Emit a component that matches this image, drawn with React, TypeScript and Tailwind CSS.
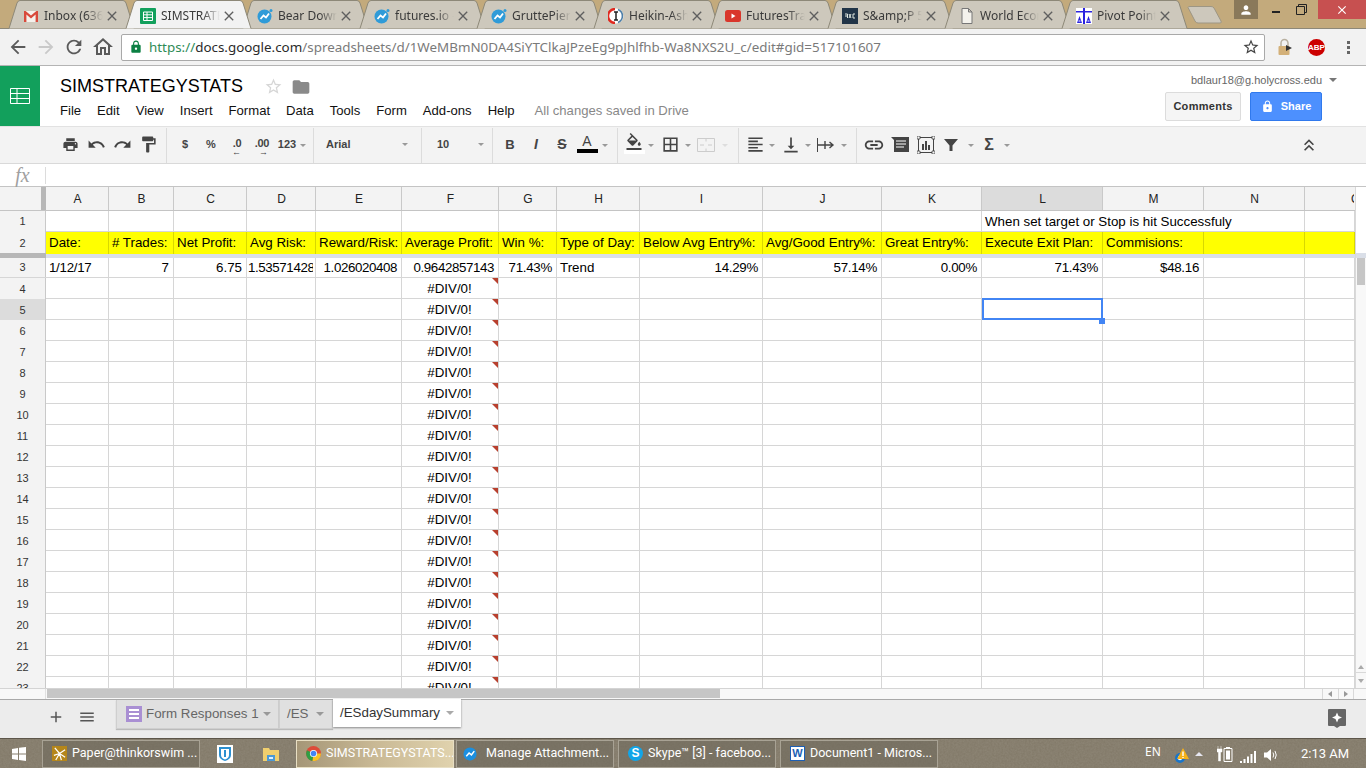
import type { ReactNode } from "react";
import {
  MdAdd,
  MdArrowBack,
  MdArrowForward,
  MdBorderAll,
  MdClose,
  MdFolder,
  MdFormatAlignLeft,
  MdFormatColorFill,
  MdFormatPaint,
  MdKeyboardDoubleArrowUp,
  MdLink,
  MdLock,
  MdMenu,
  MdOutlineHome,
  MdPerson,
  MdPrint,
  MdRedo,
  MdRefresh,
  MdStarBorder,
  MdUndo,
  MdVerticalAlignBottom,
} from "react-icons/md";

const GRID_COLS =
  "grid grid-cols-[46px_63px_65px_73px_69px_86px_97px_58px_83px_123px_119px_100px_121px_101px_101px_50px]";

const TABS = [
  { title: "Inbox (636)", icon: "gmail" },
  { title: "SIMSTRATEGYSTATS", icon: "sheets", active: true },
  { title: "Bear Down Trading", icon: "blue" },
  { title: "futures.io - Forum", icon: "blue" },
  { title: "GruttePier Trader", icon: "blue" },
  { title: "Heikin-Ashi Candles", icon: "heikin" },
  { title: "FuturesTrader71", icon: "yt" },
  { title: "S&amp;P 500", icon: "pxc" },
  { title: "World Economic", icon: "doc" },
  { title: "Pivot Points", icon: "pivot" },
];

const HEADERS = ["A", "B", "C", "D", "E", "F", "G", "H", "I", "J", "K", "L", "M", "N", "O"];

const ROW2 = [
  "Date:",
  "# Trades:",
  "Net Profit:",
  "Avg Risk:",
  "Reward/Risk:",
  "Average Profit:",
  "Win %:",
  "Type of Day:",
  "Below Avg Entry%:",
  "Avg/Good Entry%:",
  "Great Entry%:",
  "Execute Exit Plan:",
  "Commisions:",
  "",
  "",
];

const ROW3: [string, string][] = [
  ["1/12/17", "text-left tracking-[-0.3px]"],
  ["7", "text-right"],
  ["6.75", "text-right"],
  ["1.535714286", "text-left tracking-[-0.4px] !pl-[1px]"],
  ["1.026020408", "text-right tracking-[-0.4px]"],
  ["0.9642857143", "text-right tracking-[-0.4px]"],
  ["71.43%", "text-right tracking-[-0.3px]"],
  ["Trend", "text-left"],
  ["14.29%", "text-right tracking-[-0.3px]"],
  ["57.14%", "text-right tracking-[-0.3px]"],
  ["0.00%", "text-right tracking-[-0.3px]"],
  ["71.43%", "text-right tracking-[-0.3px]"],
  ["$48.16", "text-right tracking-[-0.3px]"],
  ["", ""],
  ["", ""],
];

const ERROR_ROWS = Array.from({ length: 20 }, (_, i) => i + 4);

function Favicon({ kind }: { kind: string }) {
  if (kind === "gmail")
    return (
      <svg viewBox="0 0 16 16" className="w-4 h-4 shrink-0">
        <rect x="1" y="3" width="14" height="11" fill="#f4f1ec" />
        <path d="M1 14V3h1.6L8 7.6 13.4 3H15v11h-2.4V6.6L8 10.400 3.400 6.600V14z" fill="#d8493b" />
      </svg>
    );
  if (kind === "sheets")
    return (
      <svg viewBox="0 0 16 16" className="w-4 h-4 shrink-0">
        <rect width="16" height="16" rx="1" fill="#12a05c" />
        <path d="M3.5 4h9v8.5h-9zM3.5 6.8h9M3.5 9.6h9M7 4v8.5" fill="none" stroke="#fff" />
      </svg>
    );
  if (kind === "blue")
    return (
      <svg viewBox="0 0 16 16" className="w-4 h-4 shrink-0">
        <circle cx="7.5" cy="8.5" r="7" fill="#2f9bd8" />
        <path d="M3.5 11 6.5 7.5 9 9.5l3-4" fill="none" stroke="#fff" strokeWidth="1.8" />
        <circle cx="14" cy="2.5" r="1.5" fill="#2f9bd8" />
      </svg>
    );
  if (kind === "heikin")
    return (
      <svg viewBox="0 0 16 16" className="w-4 h-4 shrink-0">
        <circle cx="8" cy="8" r="7.5" fill="#fff" />
        <path d="M7 1a7 7 0 0 0 0 14" fill="none" stroke="#e0291f" strokeWidth="2.4" />
        <path d="M10 1.5a7 7 0 0 1 0 13" fill="none" stroke="#4d7ea8" strokeWidth="1.6" />
        <path d="M6 4h4M6 12h4M8 4v8" fill="none" stroke="#222" strokeWidth="1.5" />
      </svg>
    );
  if (kind === "yt")
    return (
      <svg viewBox="0 0 16 16" className="w-4 h-4 shrink-0">
        <rect y="2" width="16" height="12" rx="2.5" fill="#d9362b" />
        <path d="M6.5 5.5v5l4-2.5z" fill="#fff" />
      </svg>
    );
  if (kind === "pxc")
    return (
      <svg viewBox="0 0 16 16" className="w-4 h-4 shrink-0">
        <rect width="16" height="16" fill="#223548" />
        <path d="M3 6h2.5v4M3 8h2.5M7 6l2 4M9 6l-2 4M13 6h-2v4h2" fill="none" stroke="#dfe7df" strokeWidth="1" />
      </svg>
    );
  if (kind === "doc")
    return (
      <svg viewBox="0 0 16 16" className="w-4 h-4 shrink-0">
        <path d="M3 .5h6.5l3.5 3.500v11.500H3zM9.500.5V4H13" fill="#f4f2ec" stroke="#777" />
      </svg>
    );
  return (
    <svg viewBox="0 0 16 16" className="w-4 h-4 shrink-0">
      <rect width="16" height="16" fill="#fff" />
      <path d="M0 3h16v1.500H0zM7 0h2v16H7zM1 15l2.500-7L6 15zM10 15l2.500-7 2.500 7z" fill="#2a22e0" />
      <path d="M2.500 13h2M11.500 13h2" stroke="#fff" />
    </svg>
  );
}

function ChromeTab({ title, icon, active }: { title: string; icon: string; active?: boolean }) {
  return (
    <div className={`relative w-[117px] h-[28px] shrink-0 flex items-center pl-[10px] pt-[3px] ${active ? "z-10" : ""}`}>
      <svg viewBox="0 0 127 29" className="absolute left-[-5px] top-0 w-[127px] h-[29px]">
        <path
          d="M1 28.500 9 3Q10 .5 12 .5H115Q117 .5 118 3L126 28.500"
          fill={active ? "#f2f2f2" : "#cdc8bc"}
          stroke="#8d8878"
        />
      </svg>
      <div className="relative flex items-center h-[16px]">
        <Favicon kind={icon} />
        <span className="ml-[5px] w-[60px] overflow-hidden whitespace-nowrap text-[12px] leading-4 text-[#3a3a3a] font-['Noto_Sans'] [mask-image:linear-gradient(to_right,black_70%,transparent_98%)]">
          {title}
        </span>
        <MdClose className="w-[16px] h-[16px] text-[#5f5f5f] shrink-0" />
      </div>
    </div>
  );
}

function TabStrip() {
  return (
    <div className="relative h-[29px] shrink-0 bg-[#c3aa7c] border-b border-[#8d8878] flex pl-[13px]">
      {TABS.map((t) => (
        <ChromeTab key={t.title} {...t} />
      ))}
      <svg viewBox="0 0 36 18" className="ml-[4px] mt-[6px] w-[36px] h-[18px]">
        <path d="M1 1.500Q1 .5 3 .5H24Q26 .5 27 2L34 15Q35 17 33 17H11Q9 17 8 15z" fill="#cdc8bc" stroke="#9d9684" />
      </svg>
      <div className="ml-auto flex items-start h-[19px]">
        <div className="w-[24px] h-[19px] bg-[#8a795a] flex items-center justify-center">
          <MdPerson className="w-[14px] h-[14px] text-white" />
        </div>
        <div className="w-[60px] h-[19px] pl-[3px] flex items-center justify-center gap-[16px]">
          <span className="w-[8px] h-[2px] mt-[5px] bg-[#222]" />
          <svg viewBox="0 0 11 11" className="w-[11px] h-[11px]">
            <path d="M.5 2.500h8v8h-8zM2.500 2.500v-2h8v8h-2" fill="none" stroke="#222" />
          </svg>
        </div>
        <div className="w-[48px] h-[19px] bg-[#c75050] flex items-center justify-center">
          <MdClose className="w-[14px] h-[14px] text-white" />
        </div>
      </div>
    </div>
  );
}

function AddressBar() {
  return (
    <div className="h-[37px] shrink-0 bg-[#f2f2f2] border-b border-[#b4b4b4] flex items-center">
      <div className="w-[121px] flex items-center pl-[7px] gap-[6px] text-[#5a5a5a]">
        <MdArrowBack className="w-[22px] h-[22px]" />
        <MdArrowForward className="w-[22px] h-[22px] text-[#c9c9c9]" />
        <MdRefresh className="w-[22px] h-[22px]" />
        <MdOutlineHome className="w-[24px] h-[24px]" />
      </div>
      <div className="w-[1144px] h-[27px] bg-white border border-[#a9a9a9] rounded-[2px] flex items-center pl-[7px] pr-[4px] font-['Noto_Sans'] text-[13.4px]">
        <MdLock className="w-[14px] h-[14px] text-[#0b8043] shrink-0" />
        <span className="ml-[6px] whitespace-nowrap">
          <span className="text-[#2e8b57]">https://</span>
          <span className="text-[#2a2a2a]">docs.google.com</span>
          <span className="text-[#7a7a7a]">/spreadsheets/d/1WeMBmN0DA4SiYTClkaJPzeEg9pJhlfhb-Wa8NXS2U_c/edit#gid=517101607</span>
        </span>
        <MdStarBorder className="ml-auto w-[18px] h-[18px] text-[#444]" />
      </div>
      <div className="flex-1 flex items-center pl-[12px]">
        <svg viewBox="0 0 16 18" className="w-[16px] h-[18px]">
          <path d="M4 8V5a3.500 3.500 0 0 1 7 0v3" fill="none" stroke="#b8b0a0" strokeWidth="1.5" />
          <rect x="1.5" y="8" width="11" height="9" rx="1" fill="#d3b078" />
          <path d="M9 7l6 3-6 3z" fill="#333" />
        </svg>
        <span className="w-[17px] h-[17px] ml-[15px] rounded-full bg-[#c00] text-white text-[8px] font-bold leading-[17px] text-center font-['Liberation_Sans']">
          ABP
        </span>
        <span className="flex flex-col gap-[2px] ml-[22px]">
          <span className="w-[3px] h-[3px] bg-[#666]" />
          <span className="w-[3px] h-[3px] bg-[#666]" />
          <span className="w-[3px] h-[3px] bg-[#666]" />
        </span>
      </div>
    </div>
  );
}

function SheetHeader() {
  const menu = ["File", "Edit", "View", "Insert", "Format", "Data", "Tools", "Form", "Add-ons", "Help"];
  return (
    <div className="h-[60px] shrink-0 bg-white flex">
      <div className="w-[40px] bg-[#12a05c] flex items-center justify-center">
        <svg viewBox="0 0 20 16" className="w-[20px] h-[16px]">
          <path d="M.5.5h19v15H.5zM.5 5.500h19M.5 10.500h19M7 .5v15" fill="none" stroke="#fff" />
        </svg>
      </div>
      <div className="pl-[20px] flex-1">
        <div className="flex items-center h-[23px] mt-[9px]">
          <span className="text-[18px] leading-[23px] text-black">SIMSTRATEGYSTATS</span>
          <MdStarBorder className="ml-[21px] w-[19px] h-[19px] text-[#d6d6d6]" />
          <MdFolder className="ml-[8px] w-[20px] h-[20px] text-[#8a8a8a]" />
        </div>
        <div className="flex items-center gap-[16px] mt-[3px] text-[13.1px] leading-[20px] text-[#111]">
          {menu.map((m) => (
            <span key={m}>{m}</span>
          ))}
          <span className="ml-[4px] text-[#888]">All changes saved in Drive</span>
        </div>
      </div>
      <div className="w-[201px] relative">
        <div className="flex items-center h-[16px] mt-[6px] pl-[26px] text-[11px] text-[#666]">
          bdlaur18@g.holycross.edu
          <span className="ml-[7px] w-0 h-0 border-x-[4px] border-x-transparent border-t-[4px] border-t-[#777]" />
        </div>
        <div className="flex mt-[4px]">
          <div className="w-[76px] h-[29px] bg-[#f5f5f5] border border-[#dcdcdc] rounded-[2px] text-[11px] font-bold text-[#333] tracking-[0.3px] flex items-center justify-center">
            Comments
          </div>
          <div className="ml-[9px] w-[72px] h-[29px] bg-[#4d90fe] border border-[#3079ed] rounded-[2px] text-[11px] font-bold text-white flex items-center justify-center">
            <MdLock className="w-[13px] h-[13px] mr-[7px]" />
            Share
          </div>
        </div>
      </div>
    </div>
  );
}

function Tool({ className, children }: { className: string; children: ReactNode }) {
  return <div className={`relative h-[22px] -mt-px shrink-0 flex items-center justify-center text-[#444] ${className}`}>{children}</div>;
}

function Caret({ className = "", light }: { className?: string; light?: boolean }) {
  return (
    <div className={`w-[9px] shrink-0 flex justify-center ${className}`}>
      <span className={`w-0 h-0 border-x-[3.5px] border-x-transparent border-t-[3.5px] ${light ? "border-t-[#ddd]" : "border-t-[#999]"}`} />
    </div>
  );
}

function Divider({ className = "" }: { className?: string }) {
  return <span className={`w-px h-[35px] bg-[#dcdcdc] shrink-0 ${className}`} />;
}

function Toolbar() {
  return (
    <div className="h-[37px] shrink-0 bg-[#f3f3f3] border-t border-[#e2e2e2] flex items-center pl-[57px]">
      <Tool className="w-[26px]"><MdPrint className="w-[17px] h-[17px]" /></Tool>
      <Tool className="w-[26px]"><MdUndo className="w-[19px] h-[19px]" /></Tool>
      <Tool className="w-[26px]"><MdRedo className="w-[19px] h-[19px]" /></Tool>
      <Tool className="w-[26px]"><MdFormatPaint className="w-[19px] h-[19px]" /></Tool>
      <Divider className="ml-[5px]" />
      <Tool className="w-[26px] ml-[5px] text-[11px] font-bold">$</Tool>
      <Tool className="w-[26px] text-[11px] font-bold">%</Tool>
      <Tool className="w-[26px] text-[11px] font-bold">
        <span className="-mt-[3px] tracking-[-0.3px]">.0</span>
        <span className="absolute left-[8px] top-[14px] text-[9px] leading-[8px]">←</span>
      </Tool>
      <Tool className="w-[24px] text-[11px] font-bold">
        <span className="-mt-[3px] tracking-[-0.3px]">.00</span>
        <span className="absolute left-[9px] top-[14px] text-[9px] leading-[8px]">→</span>
      </Tool>
      <Tool className="w-[26px] text-[11px] font-bold">123</Tool>
      <Caret className="-ml-[2px]" />
      <Divider className="ml-[6px]" />
      <Tool className="w-[107px] !justify-start pl-[12px] text-[11px] font-bold">
        Arial
        <Caret className="absolute left-[86px] top-[9px]" />
      </Tool>
      <Divider />
      <Tool className="w-[70px] !justify-start pl-[15px] text-[11px] font-bold">
        10
        <Caret className="absolute left-[54px] top-[9px]" />
      </Tool>
      <Divider />
      <Tool className="w-[26px] ml-[4px] text-[13px] font-bold">B</Tool>
      <Tool className="w-[26px] text-[14px] font-bold italic">I</Tool>
      <Tool className="w-[26px] text-[14px] font-bold line-through">S</Tool>
      <Tool className="w-[24px] flex-col">
        <span className="text-[14px] leading-[14px] -mt-[2px]">A</span>
        <span className="w-[21px] h-[4px] bg-black mt-[1px]" />
      </Tool>
      <Caret className="ml-px" />
      <Divider className="ml-[8px]" />
      <Tool className="w-[24px] ml-[4px] flex-col">
        <MdFormatColorFill className="w-[18px] h-[18px] -mt-[3px]" />
        <span className="w-[21px] h-[4px] bg-white mt-[-1px]" />
      </Tool>
      <Caret />
      <Tool className="w-[24px] ml-[3px]"><MdBorderAll className="w-[19px] h-[19px]" /></Tool>
      <Caret className="ml-px" />
      <Tool className="w-[24px] ml-[2px]">
        <svg viewBox="0 0 18 14" className="w-[18px] h-[14px]">
          <path d="M.5.5h17v13H.5zM9 .5v3M9 10.500v3M3 7h4M15 7h-4" fill="none" stroke="#ccc" />
        </svg>
      </Tool>
      <Caret light className="ml-[2px]" />
      <Divider className="ml-[9px]" />
      <Tool className="w-[24px] ml-[4px]"><MdFormatAlignLeft className="w-[19px] h-[19px]" /></Tool>
      <Caret />
      <Tool className="w-[24px] ml-[3px]"><MdVerticalAlignBottom className="w-[20px] h-[20px]" /></Tool>
      <Caret />
      <Tool className="w-[24px] ml-[2px]">
        <svg viewBox="0 0 18 16" className="w-[18px] h-[16px]">
          <path d="M.5 1v14" stroke="#444" fill="none" />
          <path d="M1 8h15M12.500 5l3.500 3-3.500 3M8 4v8" stroke="#444" fill="none" strokeWidth="1.4" />
        </svg>
      </Tool>
      <Caret className="ml-px" />
      <Divider className="ml-[8px]" />
      <Tool className="w-[26px] ml-[4px]"><MdLink className="w-[22px] h-[22px]" /></Tool>
      <Tool className="w-[26px]">
        <svg viewBox="0 0 18 15" className="w-[18px] h-[15px]">
          <path d="M0 0h18v15H3V3z" fill="#444" />
          <path d="M5 4h10M5 7h10M5 10h8" stroke="#fff" />
        </svg>
      </Tool>
      <Tool className="w-[26px]">
        <svg viewBox="0 0 18 18" className="w-[18px] h-[18px]">
          <path d="M1.500 1.500h15v15h-15z" fill="none" stroke="#444" />
          <path d="M5 8h2v6H5zM8 5h2v9H8zM11 9h2v5h-2z" fill="#444" />
          <path d="M0 0h3v3H0zM15 0h3v3h-3zM0 15h3v3H0zM15 15h3v3h-3z" fill="#f3f3f3" stroke="#444" strokeWidth=".8" />
        </svg>
      </Tool>
      <Tool className="w-[24px]">
        <svg viewBox="0 0 14 14" className="w-[14px] h-[14px]">
          <path d="M0 1h14L8.500 7.500V13h-3V7.500z" fill="#444" />
        </svg>
      </Tool>
      <Caret className="ml-[3px]" />
      <Tool className="w-[24px] ml-[2px] text-[16px] font-bold">Σ</Tool>
      <Caret className="ml-px" />
      <Tool className="w-[24px] ml-[286px]"><MdKeyboardDoubleArrowUp className="w-[20px] h-[20px]" /></Tool>
    </div>
  );
}

function FormulaBar() {
  return (
    <div className="h-[24px] shrink-0 bg-white border-y border-[#d9d9d9] border-b-[#c4c4c4] flex items-center">
      <span className="w-[45px] text-center text-[20px] italic leading-none text-[#a0a0a0] font-['Liberation_Serif']">fx</span>
      <span className="w-px h-[17px] bg-[#dcdcdc]" />
    </div>
  );
}

function ColumnHeader() {
  return (
    <div className={`${GRID_COLS} h-[24px] bg-[#f3f3f3] border-b border-[#c4c4c4]`}>
      <div className="border-r-[5px] border-[#b7b7b7]" />
      {HEADERS.map((h) => (
        <div
          key={h}
          className={`flex items-center border-r text-[12px] text-[#222] ${h === "L" ? "bg-[#dcdcdc]" : ""} ${
            h === "O" ? "pl-[46px] overflow-hidden border-transparent" : "justify-center pl-px border-[#c9c9c9]"
          }`}
        >
          {h}
        </div>
      ))}
    </div>
  );
}

function RowNumber({ n, selected }: { n: number; selected?: boolean }) {
  return (
    <div className={`flex items-center justify-center border-r border-[#c9c9c9] text-[11px] text-[#333] ${selected ? "bg-[#dcdcdc]" : "bg-[#f3f3f3]"}`}>
      {n}
    </div>
  );
}

function Cell({ className = "", children }: { className?: string; children?: ReactNode }) {
  return (
    <div className={`relative pl-[3px] pr-[4px] border-r border-[#d6d6d6] text-[13.33px] leading-[22px] text-black whitespace-nowrap ${className}`}>
      {children}
    </div>
  );
}

function DataRow({ n }: { n: number }) {
  return (
    <div className={`${GRID_COLS} h-[21px] shrink-0 border-b border-[#d6d6d6]`}>
      <RowNumber n={n} selected={n === 5} />
      {HEADERS.map((h) => (
        <Cell key={h} className={h === "F" ? "text-center" : ""}>
          {h === "F" && (
            <>
              #DIV/0!
              <span className="absolute top-0 right-0 w-0 h-0 border-l-[6px] border-l-transparent border-t-[6px] border-t-[#b8402e]" />
            </>
          )}
          {h === "L" && n === 5 && (
            <>
              <span className="absolute left-0 -top-px w-[121px] h-[22px] border-2 border-[#4285f4]" />
              <span className="absolute -right-[3px] -bottom-[3px] w-[6px] h-[6px] bg-[#4285f4] z-10" />
            </>
          )}
        </Cell>
      ))}
    </div>
  );
}

function Grid() {
  return (
    <div className="w-[1355px] h-[501px] shrink-0 overflow-hidden bg-white">
      <ColumnHeader />
      <div className={`${GRID_COLS} h-[21px] border-b border-[#d6d6d6]`}>
        <RowNumber n={1} />
        {HEADERS.slice(0, 11).map((h) => (
          <Cell key={h} />
        ))}
        <Cell className="col-span-3 !leading-[21px]">When set target or Stop is hit Successfuly</Cell>
        <Cell />
      </div>
      <div className={`${GRID_COLS} h-[21px] border-b border-[#d8d800]`}>
        <RowNumber n={2} />
        {ROW2.map((t, i) => (
          <Cell key={i} className="bg-[#ffff00] !border-[#d8d800]">
            {t}
          </Cell>
        ))}
      </div>
      <div className="flex h-[5px]">
        <div className="w-[46px] bg-[#b7b7b7]" />
        <div className="flex-1 bg-[#dadfe8]" />
      </div>
      <div className={`${GRID_COLS} h-[20px] border-b border-[#d6d6d6]`}>
        <RowNumber n={3} />
        {ROW3.map(([t, align], i) => (
          <Cell key={i} className={`overflow-hidden !leading-[20px] ${align}`}>
            {i === 3 ? <div className="w-[65px] overflow-hidden">{t}</div> : t}
          </Cell>
        ))}
      </div>
      {ERROR_ROWS.map((n) => (
        <DataRow key={n} n={n} />
      ))}
    </div>
  );
}

function VerticalScroll() {
  return (
    <div className="flex-1 h-[501px] flex flex-col bg-[#f8f8f8] border-l border-[#d9d9d9]">
      <div className="h-[66px] bg-white" />
      <div className="h-[5px] bg-[#dadfe8]" />
      <div className="h-[27px] mx-px bg-[#c6c6c6]" />
      <div className="flex-1" />
      <div className="h-[12px] flex items-center justify-center border-b border-[#d9d9d9]">
        <span className="w-0 h-0 border-x-[3.5px] border-x-transparent border-b-[4px] border-b-[#aaa]" />
      </div>
      <div className="h-[15px] flex items-center justify-center">
        <span className="w-0 h-0 border-x-[3.5px] border-x-transparent border-t-[4px] border-t-[#aaa]" />
      </div>
    </div>
  );
}

function SheetTabs() {
  return (
    <>
      <div className="h-[11px] shrink-0 flex bg-[#f8f8f8] border-t border-[#d4d4d4]">
        <div className="w-[46px] border-r border-[#e0e0e0]" />
        <div className="ml-px w-[673px] h-[9px] bg-[#c6c6c6]" />
        <div className="ml-auto w-[44px] flex h-[10px]">
          <div className="flex-1 flex items-center justify-center border-x border-[#d9d9d9]">
            <span className="w-0 h-0 border-y-[3.5px] border-y-transparent border-r-[4px] border-r-[#999]" />
          </div>
          <div className="flex-1 flex items-center justify-center border-r border-[#d9d9d9]">
            <span className="w-0 h-0 border-y-[3.5px] border-y-transparent border-l-[4px] border-l-[#999]" />
          </div>
          <div className="w-[12px]" />
        </div>
      </div>
      <div className="h-[39px] shrink-0 bg-[#ececec] border-t border-[#a9a9a9] flex items-start text-[13.33px] whitespace-nowrap">
        <div className="w-[116px] h-[33px] flex items-center pl-[47px] text-[#555]">
          <MdAdd className="w-[18px] h-[18px]" />
          <MdMenu className="ml-[13px] w-[18px] h-[18px]" />
        </div>
        <div className="w-[163px] h-[29px] bg-[#e0e0e0] border border-t-0 border-[#cfcfcf] shadow-[0_1px_1px_#bbb] flex items-center pl-[9px] text-[#666]">
          <span className="w-[16px] h-[16px] bg-[#a98fd3] flex flex-col items-center justify-center gap-[2px]">
            <span className="w-[10px] h-[2px] bg-white" />
            <span className="w-[10px] h-[2px] bg-white" />
            <span className="w-[10px] h-[2px] bg-white" />
          </span>
          <span className="ml-[4px] w-[117px]">Form Responses 1</span>
          <span className="w-0 h-0 border-x-[4px] border-x-transparent border-t-[4px] border-t-[#999]" />
        </div>
        <div className="w-[54px] h-[29px] bg-[#e0e0e0] border border-t-0 border-[#cfcfcf] shadow-[0_1px_1px_#bbb] flex items-center pl-[7px] text-[#666]">
          <span className="w-[29px]">/ES</span>
          <span className="w-0 h-0 border-x-[4px] border-x-transparent border-t-[4px] border-t-[#999]" />
        </div>
        <div className="w-[128px] h-[28px] -mt-px bg-white shadow-[0_1px_2px_#888] flex items-center pl-[7px] text-[#333]">
          <span className="w-[106px]">/ESdaySummary</span>
          <span className="w-0 h-0 border-x-[4px] border-x-transparent border-t-[4px] border-t-[#aaa]" />
        </div>
        <svg viewBox="0 0 18 20" className="ml-auto mr-[20px] mt-[9px] w-[18px] h-[20px]">
          <path d="M1 0h16q1 0 1 1v15q0 1-1 1h-5l-3 2-3-2H1q-1 0-1-1V1q0-1 1-1z" fill="#666" />
          <path d="M9 3.500 10.500 7 14 8.500 10.500 10 9 13.500 7.500 10 4 8.500 7.500 7z" fill="#fff" />
        </svg>
      </div>
    </>
  );
}

function TaskButton({ icon, label, active }: { icon: ReactNode; label: string; active?: boolean }) {
  return (
    <div
      className={`w-[158px] h-[28px] shrink-0 flex items-center pl-[9px] border text-[12.5px] text-white whitespace-nowrap overflow-hidden font-['Roboto'] ${
        active
          ? "border-[#e8dfc4] bg-gradient-to-r from-[#a59677] via-[#c9b995] to-[#e0d2ad]"
          : "border-[#a8a294] bg-[#6e685b]/55"
      }`}
    >
      {icon}
      <span className="ml-[5px]">{label}</span>
    </div>
  );
}

function ChromeLogo() {
  return (
    <svg viewBox="0 0 16 16" className="w-[15px] h-[15px] shrink-0">
      <circle cx="8" cy="8" r="8" fill="#dd4b39" />
      <path d="M8 8 1 4.500A8 8 0 0 0 7 16z" fill="#2f9e44" />
      <path d="M8 8h8a8 8 0 0 1-9 8z" fill="#f7c325" />
      <circle cx="8" cy="8" r="3.800" fill="#fff" />
      <circle cx="8" cy="8" r="3" fill="#4285f4" />
    </svg>
  );
}

function Taskbar() {
  return (
    <div className="relative h-[30px] shrink-0 overflow-hidden border-t border-[#5d564a] bg-[#8b8373]">
      <svg className="absolute inset-0 w-full h-full">
        <filter id="grain">
          <feTurbulence type="fractalNoise" baseFrequency="0.55" numOctaves="2" seed="4" />
          <feColorMatrix values="0 0 0 0 .2  0 0 0 0 .17  0 0 0 0 .12  0 0 0 .9 -.2" />
        </filter>
        <rect width="100%" height="100%" filter="url(#grain)" />
      </svg>
      <div className="relative flex items-center h-full pl-[42px]">
        <svg viewBox="0 0 14 14" className="absolute left-[12px] top-[8px] w-[14px] h-[14px]">
          <path d="M0 2l6-1v5.500H0zM7 .8 14 0v6.500H7zM0 7.500h6V13l-6-1zM7 7.500h7V14l-7-.9z" fill="#fff" />
        </svg>
        <TaskButton
          label="Paper@thinkorswim ..."
          icon={
            <svg viewBox="0 0 16 16" className="w-[15px] h-[15px] shrink-0">
              <rect width="16" height="16" fill="#b5861a" />
              <path d="M8 8 3 2M8 8l6-4M8 8l-6 2M8 8l2 7M8 8 4 15M8 8l6 4" stroke="#fff" strokeWidth="1.300" />
            </svg>
          }
        />
        <div className="w-[50px] flex justify-center shrink-0">
          <svg viewBox="0 0 16 18" className="w-[16px] h-[18px]">
            <rect width="16" height="18" fill="#fff" />
            <path d="M2 2h12v8q0 4-6 6-6-2-6-6z" fill="#2b8fd0" />
            <path d="M4 4h8v6q0 3-4 4.500-4-1.500-4-4.500z" fill="#fff" />
            <path d="M8 5v7" stroke="#2b8fd0" strokeWidth="2" />
          </svg>
        </div>
        <div className="w-[42px] flex justify-center shrink-0">
          <svg viewBox="0 0 16 16" className="w-[16px] h-[16px]">
            <path d="M0 2h6l1 2h9v11H0z" fill="#f0cf6e" />
            <path d="M4 9h8v6H4z" fill="#4b9ad6" />
            <path d="M6 11h4v2H6z" fill="#dcefff" />
          </svg>
        </div>
        <div className="w-[4px] shrink-0" />
        <TaskButton label="SIMSTRATEGYSTATS..." active icon={<ChromeLogo />} />
        <div className="w-[2px] shrink-0" />
        <TaskButton
          label="Manage Attachment..."
          icon={
            <svg viewBox="0 0 16 16" className="w-[15px] h-[15px] shrink-0 -ml-[3px] mr-[3px]">
              <circle cx="7.500" cy="8.500" r="7" fill="#1b8fe0" />
              <path d="M3.500 11 6.500 7.500 9 9.500l3-4" fill="none" stroke="#fff" strokeWidth="1.600" />
            </svg>
          }
        />
        <div className="w-[4px] shrink-0" />
        <TaskButton
          label="Skype™ [3] - faceboo..."
          icon={
            <span className="w-[15px] h-[15px] shrink-0 rounded-full bg-[#12a5e8] text-white text-[12px] font-bold leading-[15px] text-center font-['Liberation_Sans']">
              S
            </span>
          }
        />
        <div className="w-[4px] shrink-0" />
        <TaskButton
          label="Document1 - Micros..."
          icon={
            <span className="w-[15px] h-[15px] shrink-0 bg-white border border-[#1d5fb4] text-[#1d5fb4] text-[11px] font-bold leading-[13px] text-center font-['Liberation_Sans']">
              W
            </span>
          }
        />
        <span className="absolute left-[1145px] top-[5px] text-[12px] leading-[15px] text-white font-['Noto_Sans']">EN</span>
        <svg viewBox="0 0 16 16" className="absolute left-[1174px] top-[9px] w-[16px] h-[16px]">
          <circle cx="6" cy="10" r="5" fill="#1b75c8" />
          <circle cx="6" cy="10" r="2.200" fill="#fff" />
          <path d="M9 0l6 11H3z" fill="#f7b21a" />
          <path d="M9 3.500v4.500M9 9v1" stroke="#fff" strokeWidth="1.400" />
        </svg>
        <span className="absolute left-[1195px] top-[13px] w-0 h-0 border-x-[4px] border-x-transparent border-b-[4px] border-b-[#e6e6f0]" />
        <svg viewBox="0 0 16 16" className="absolute left-[1217px] top-[7px] w-[16px] h-[16px]">
          <path d="M1 0v3M4 0v3M0 3h5v3H3.500v9h-2V6H0z" fill="#fff" stroke="#fff" strokeWidth=".5" />
          <path d="M7 2.500h8v13H7z" fill="none" stroke="#fff" />
          <path d="M9 1h4v1H9zM9 4.500h4v9H9z" fill="#fff" />
        </svg>
        <svg viewBox="0 0 16 12" className="absolute left-[1240px] top-[12px] w-[16px] h-[12px]">
          <path d="M0 10h2v2H0zM3.500 8h2v4h-2zM7 5.500h2V12H7zM10.500 3h2v9h-2zM14 0h2v12h-2z" fill="#fff" />
        </svg>
        <svg viewBox="0 0 14 14" className="absolute left-[1264px] top-[9px] w-[14px] h-[14px]">
          <path d="M0 4.500h3L7 1v12L3 9.500H0z" fill="#fff" />
          <path d="M9 4.500q1.500 2.500 0 5M11 3q2.500 4 0 8" fill="none" stroke="#fff" />
        </svg>
        <span className="absolute left-[1301px] top-[7px] text-[13px] leading-[16px] text-white font-['Roboto']">2:13 AM</span>
      </div>
    </div>
  );
}

export default function App() {
  return (
    <div className="w-[1366px] h-[768px] overflow-hidden flex flex-col bg-white font-['Liberation_Sans',Arial,sans-serif]">
      <TabStrip />
      <AddressBar />
      <SheetHeader />
      <Toolbar />
      <FormulaBar />
      <div className="flex shrink-0">
        <Grid />
        <VerticalScroll />
      </div>
      <SheetTabs />
      <Taskbar />
    </div>
  );
}
